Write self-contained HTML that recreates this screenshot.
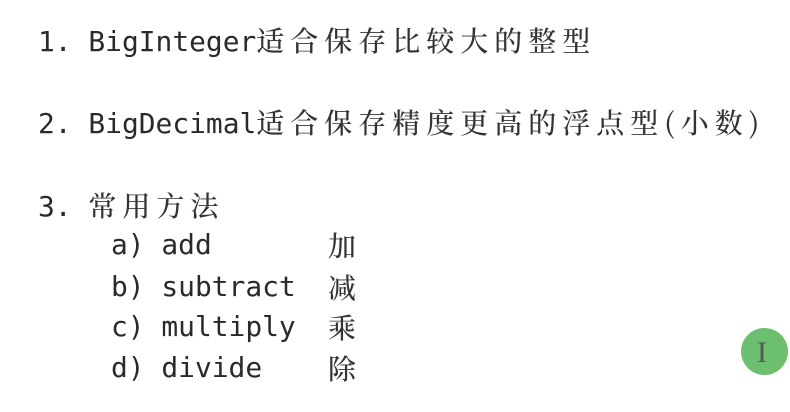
<!DOCTYPE html><html><head><meta charset="utf-8"><style>
body{margin:0;width:790px;height:412px;background:#fff;overflow:hidden;position:relative;color:#2a2a2a}
.l{position:absolute;white-space:nowrap;font-family:"DejaVu Sans Mono","Liberation Mono",monospace;font-size:27.9px;line-height:34px}
.c{font-family:"Noto Serif CJK SC","Noto Sans CJK SC",serif;font-size:28px;letter-spacing:6px;font-weight:500;color:#333}
#circ{position:absolute;left:741px;top:328px;width:47px;height:47px;border-radius:50%;background:#6dbf70}
#circ span{position:absolute;left:16px;top:8px;font-family:"Liberation Serif",serif;font-size:30px;color:#555}
</style></head><body>
<div class="l" style="left:38px;top:23px">1. BigInteger<span class="c">适合保存比较大的整型</span></div>
<div class="l" style="left:38px;top:105px">2. BigDecimal<span class="c">适合保存精度更高的浮点型(小数)</span></div>
<div class="l" style="left:38px;top:188px">3. <span class="c">常用方法</span></div>
<div class="l" style="left:111px;top:228px">a) add</div><div class="l c" style="left:328px;top:228px">加</div>
<div class="l" style="left:111px;top:270px">b) subtract</div><div class="l c" style="left:328px;top:270px">减</div>
<div class="l" style="left:111px;top:310px">c) multiply</div><div class="l c" style="left:328px;top:310px">乘</div>
<div class="l" style="left:111px;top:351px">d) divide</div><div class="l c" style="left:328px;top:351px">除</div>
<div id="circ"><span>I</span></div>
</body></html>
